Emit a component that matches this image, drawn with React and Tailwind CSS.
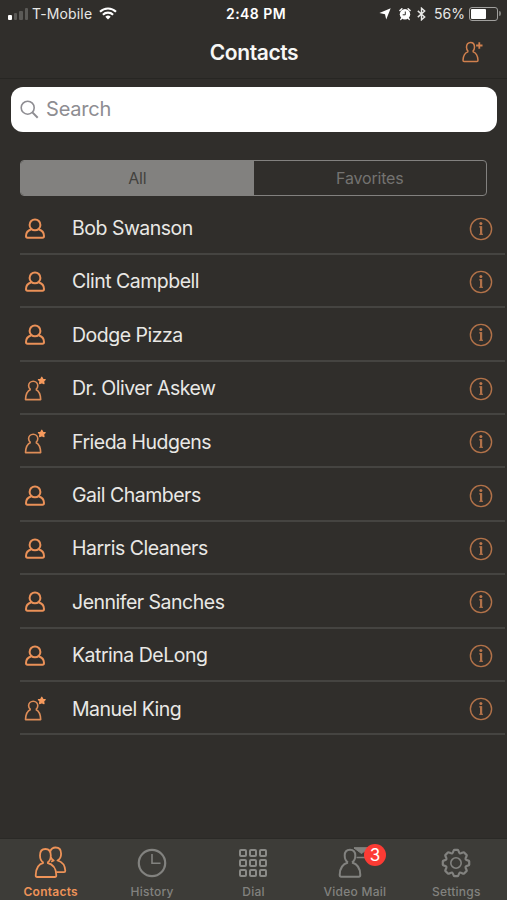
import React, { useState } from 'react';

const contacts = [
  { name: 'Bob Swanson', favorite: false },
  { name: 'Clint Campbell', favorite: false },
  { name: 'Dodge Pizza', favorite: false },
  { name: 'Dr. Oliver Askew', favorite: true },
  { name: 'Frieda Hudgens', favorite: true },
  { name: 'Gail Chambers', favorite: false },
  { name: 'Harris Cleaners', favorite: false },
  { name: 'Jennifer Sanches', favorite: false },
  { name: 'Katrina DeLong', favorite: false },
  { name: 'Manuel King', favorite: true },
];

const PersonIcon = () => (
  <svg className="w-[22px] h-[22px]" viewBox="0 0 22 22" fill="none" stroke="#ea9158" strokeWidth="2" strokeLinejoin="round">
    <circle cx="11" cy="6.900" r="5.4" />
    <path d="M7.4 11.2C4 12.2 2 14.800 2 18c0 1.200.5 1.800 1.500 1.800h15c1 0 1.500-.6 1.500-1.800 0-3.200-2-5.800-5.400-6.800" />
  </svg>
);

const FavoriteIcon = () => (
  <svg className="w-[24px] h-[26px]" viewBox="0 0 24 26" fill="none" stroke="#dd8d58" strokeWidth="1.6" strokeLinejoin="round">
    <path d="M6.600 13.600C5.300 12.700 4.600 11.300 4.600 9.800a4.600 4.600 0 0 1 9.200 0c0 1.500-.7 2.900-2 3.800" />
    <path d="M6.600 13.600C3.500 15 1.700 18.300 1.500 23.600h15.200c-.2-5.300-1.800-8.600-4.900-10" />
    <path d="M17.800 1.200l1.100 2.100 2.300.3-1.600 1.700.4 2.300-2.200-1-2.200 1 .4-2.300-1.600-1.700 2.300-.3z" fill="#f79a5d" stroke="#f79a5d" strokeWidth="1.200" />
  </svg>
);

const AddContactIcon = () => (
  <svg className="w-[22px] h-[23px]" viewBox="0 0 22 23" fill="none" stroke="#d0804e" strokeWidth="1.500" strokeLinejoin="round">
    <path d="M6.300 10.600C5.100 9.600 4.500 8 4.500 6.200c0-2.800 1.500-4.700 4-4.700s4 1.900 4 4.700c0 1.800-.6 3.400-1.800 4.400" />
    <path d="M6.300 10.600C3 11.700 1.200 14.500 1 19.200c0 .8.400 1.200 1.100 1.200h12.800c.7 0 1.100-.4 1.100-1.200-.2-4.700-2-7.500-5.300-8.600" />
    <path d="M17.300 1.300v6.400M14.100 4.500h6.400" strokeWidth="1.800" />
  </svg>
);

const InfoIcon = () => (
  <svg className="block w-6 h-6" viewBox="0 0 24 24" fill="none" stroke="#b27249" strokeWidth="1.400">
    <circle cx="12" cy="12" r="10.600" />
    <circle cx="11.900" cy="6.500" r="1.500" fill="#bd774c" stroke="none" />
    <path d="M10.200 9.800h2v7.500" strokeWidth="1.300" />
    <path d="M12.100 9.200v8.300" strokeWidth="2.200" />
    <path d="M10.200 17.300h3.800" strokeWidth="1.100" />
  </svg>
);

const ContactsTabIcon = () => (
  <svg className="w-[34px] h-[34px]" viewBox="0 0 34 34" fill="none" stroke="#ee9358" strokeWidth="1.800" strokeLinejoin="round">
    <path d="M9.600 16.800C7.200 15.300 6 12.700 6 9.500 6 5.500 8 3 11.400 3s5.400 2.500 5.400 6.500c0 3.200-1.200 5.800-3.600 7.300" />
    <path d="M9.600 16.800C4.500 18 1.800 22 1.700 29.200c0 1.200.5 1.800 1.500 1.800h17.600c1 0 1.500-.6 1.500-1.800-.1-7.200-3.500-11.200-9.100-12.400" />
    <path d="M16.300 5.400C17.100 2.900 18.900 1.500 21.600 1.500c3.500 0 5.500 2.300 5.500 6.200 0 3.200-1.200 5.500-3.600 6.800 4.900 1.300 7.500 4.700 7.800 10.300 0 .9-.4 1.400-1.300 1.400h-7.800M16.700 11c.6 1.600 1.600 2.800 3 3.500l-2.600 1.200" />
  </svg>
);

const HistoryIcon = () => (
  <svg className="w-[30px] h-[30px]" viewBox="0 0 30 30" fill="none" stroke="#82827f" strokeWidth="2.200">
    <circle cx="15" cy="15" r="13.200" />
    <path d="M15 6v9.300h8.500" strokeWidth="1.600" />
  </svg>
);

const DialIcon = () => (
  <div className="grid grid-cols-3 gap-[2px]">
    {Array.from({ length: 9 }, (_, i) => (
      <span key={i} className="w-2 h-2 rounded-[2px] border-2 border-[#8b8b88]" />
    ))}
  </div>
);

const VideoMailIcon = () => (
  <div className="relative">
    <svg className="w-[34px] h-[34px]" viewBox="0 0 34 34" fill="none" stroke="#82827f" strokeWidth="2" strokeLinejoin="round">
      <path d="M10 16.500C7.700 15.100 6.700 12.700 6.700 9.600 6.700 6 8.700 3.700 12 3.700s5.300 2.300 5.300 5.900c0 3.100-1 5.500-3.300 6.900" />
      <path d="M10 16.500C4.700 18 1.700 22 1.700 29c0 1.200.5 1.800 1.500 1.800h17.600c1 0 1.500-.6 1.500-1.800 0-7-3-11-8.300-12.500" />
      <path d="M16 2h15v9.500H18.500" strokeWidth="1.400" />
      <path d="M16 2l7.500 5.500L31 2z" fill="#82827f" strokeWidth="1" />
    </svg>
    <span className="absolute left-[26px] -top-[2px] w-[22px] h-[22px] rounded-full bg-[#fc3b34] text-white text-[17px] font-normal tracking-normal leading-[22px] text-center">
      3
    </span>
  </div>
);

const SettingsIcon = () => (
  <svg className="w-[30px] h-[30px]" viewBox="-15 -15 30 30" fill="none" stroke="#82827f" strokeWidth="2.200" strokeLinejoin="round">
    <path d="M-3.800-9.600C-2.500-10.300-2.700-13.200-1.700-13.200H1.700C2.700-13.200 2.500-10.300 3.800-9.600 5.200-9.100 7-11.300 7.900-10.700L10.700-7.900C11.300-7 9.100-5.200 9.600-3.800 10.300-2.500 13.200-2.700 13.200-1.700V1.700C13.200 2.700 10.300 2.500 9.600 3.800 9.100 5.200 11.300 7 10.700 7.900L7.900 10.700C7 11.300 5.200 9.100 3.800 9.600 2.500 10.300 2.700 13.200 1.700 13.200H-1.700C-2.700 13.200-2.500 10.300-3.800 9.600-5.200 9.100-7 11.300-7.900 10.700L-10.700 7.900C-11.300 7-9.100 5.200-9.600 3.800-10.300 2.500-13.200 2.700-13.200 1.700V-1.700C-13.200-2.700-10.300-2.500-9.600-3.800-9.100-5.200-11.300-7-10.700-7.900L-7.900-10.700C-7-11.300-5.200-9.100-3.800-9.600Z" />
    <circle r="5.200" strokeWidth="1.600" />
  </svg>
);

const tabs = [
  { label: 'Contacts', Icon: ContactsTabIcon },
  { label: 'History', Icon: HistoryIcon },
  { label: 'Dial', Icon: DialIcon },
  { label: 'Video Mail', Icon: VideoMailIcon },
  { label: 'Settings', Icon: SettingsIcon },
];

const StatusBar = () => (
  <div className="h-[27px] grid grid-cols-[1fr_auto_1fr] items-center pl-2 pr-[6px] text-[14px] text-[#e8e8e6]">
    <div className="flex items-center">
      <div className="flex items-end gap-[2px] h-[12px] mr-[4px]">
        <span className="w-[3.500px] h-[5px] rounded-[1px] bg-white" />
        <span className="w-[3.500px] h-[7px] rounded-[1px] bg-[#5b5a57]" />
        <span className="w-[3.500px] h-[9px] rounded-[1px] bg-[#5b5a57]" />
        <span className="w-[3.500px] h-[12px] rounded-[1px] bg-[#5b5a57]" />
      </div>
      <span className="tracking-[0.15px]">T-Mobile</span>
      <svg className="w-[18px] h-[13px] ml-[7px]" viewBox="0 0 18 13" fill="none" stroke="#fff" strokeWidth="2.100">
        <path d="M1 4.700a11.500 11.500 0 0 1 16 0M3.900 7.700a7.300 7.300 0 0 1 10.200 0" />
        <path d="M9 12.500L6.300 9.800a3.900 3.900 0 0 1 5.400 0z" fill="#fff" stroke="none" />
      </svg>
    </div>
    <span className="pl-[3px] font-semibold tracking-[0.45px] text-white">2:48 PM</span>
    <div className="flex items-center justify-end">
      <svg className="w-3 h-3 mr-[7px]" viewBox="0 0 12 12" fill="#fff">
        <path d="M11.700.3L7.200 11.600 6 6.200.4 5.100z" />
      </svg>
      <svg className="w-[14px] h-[14px] mr-[5px]" viewBox="0 0 14 14" fill="#fff">
        <circle cx="7" cy="7.300" r="5.200" />
        <path d="M1.900 3.500L3.900 1.700M12.100 3.500L10.100 1.700M3.600 11.300L2.800 12.400M10.400 11.300L11.200 12.400" stroke="#fff" strokeWidth="1.400" strokeLinecap="round" />
        <path d="M7.300 4.500v3.300H4.700" fill="none" stroke="#302e2b" strokeWidth="1" />
      </svg>
      <svg className="w-[9px] h-[14px] mr-[8px]" viewBox="0 0 9 14" fill="none" stroke="#e8e8e6" strokeWidth="1.400">
        <path d="M.8 3.900l6.900 6-3.200 2.900V1.200l3.200 2.900-6.900 6" />
      </svg>
      <span>56%</span>
      <div className="w-[29px] h-[14px] ml-1 rounded-[3px] border border-[#a1a09e] p-[1px]">
        <div className="w-[15px] h-full rounded-[1px] bg-white" />
      </div>
      <span className="w-[2px] h-[5px] ml-[1px] rounded-r-full bg-[#807f7c]" />
    </div>
  </div>
);

const App = () => {
  const [filter, setFilter] = useState('All');
  const [activeTab, setActiveTab] = useState('Contacts');
  const [searchTerm, setSearchTerm] = useState('');

  const visibleContacts = contacts.filter(
    (contact) =>
      (filter === 'All' || contact.favorite) &&
      contact.name.toLowerCase().includes(searchTerm.toLowerCase())
  );

  return (
    <div className="w-full h-[900px] flex flex-col overflow-hidden bg-[#302e2b] font-['Inter',sans-serif]">
      <StatusBar />

      <header className="h-[52px] grid grid-cols-[1fr_auto_1fr] items-center px-[23px] border-b border-[#272623]">
        <span />
        <h1 className="pt-px pl-px text-[21px] font-semibold tracking-[-0.4px] text-[#f7f7f5]">Contacts</h1>
        <button className="justify-self-end">
          <AddContactIcon />
        </button>
      </header>

      <div className="mt-2 ml-[11px] mr-[10px] h-[45px] flex items-center rounded-[12px] bg-white pl-[9px]">
        <svg className="w-[19px] h-[19px]" viewBox="0 0 19 19" fill="none" stroke="#8e8d92" strokeWidth="1.600">
          <circle cx="7.700" cy="7.700" r="6.500" />
          <path d="M12.400 12.400l5.300 5.300" strokeWidth="2" />
        </svg>
        <input
          type="text"
          placeholder="Search"
          value={searchTerm}
          onChange={(e) => setSearchTerm(e.target.value)}
          className="flex-grow ml-[7px] pb-px text-[20px] tracking-[-0.2px] text-gray-800 outline-none placeholder:text-[#8e8d92]"
        />
      </div>

      <div className="mt-7 mx-5 h-9 grid grid-cols-2 rounded-[4px] border border-[#82817f] overflow-hidden text-[16px] tracking-[-0.2px]">
        {['All', 'Favorites'].map((option) => (
          <button
            key={option}
            onClick={() => setFilter(option)}
            className={filter === option ? 'bg-[#82817f] text-[#42413e]' : 'text-[#747371]'}
          >
            {option}
          </button>
        ))}
      </div>

      <ul className="mt-[5.500px] flex-grow">
        {visibleContacts.map((contact) => (
          <li key={contact.name} className="h-[53.400px] ml-5 mr-[2px] flex items-center border-b-2 border-[#454441] pt-[3px] pr-[12px]">
            <span className="w-[52px] pl-1">
              {contact.favorite ? <FavoriteIcon /> : <PersonIcon />}
            </span>
            <span className="flex-grow text-[19.500px] tracking-[-0.5px] text-[#e9e8e5]">{contact.name}</span>
            <button>
              <InfoIcon />
            </button>
          </li>
        ))}
      </ul>

      <nav className="h-[62px] shrink-0 grid grid-cols-5 border-t border-[#2a2926] bg-[#3d3c38]">
        {tabs.map(({ label, Icon }) => (
          <button
            key={label}
            onClick={() => setActiveTab(label)}
            className={`flex flex-col items-center text-[12px] tracking-[0.25px] ${
              activeTab === label ? 'font-semibold text-[#ee9358]' : 'font-medium text-[#82827f]'
            }`}
          >
            <span className="h-[34px] mt-[7px] flex items-center justify-center">
              <Icon />
            </span>
            <span className="mt-[5px] leading-[14px] whitespace-nowrap">{label}</span>
          </button>
        ))}
      </nav>
    </div>
  );
};

export default App;
